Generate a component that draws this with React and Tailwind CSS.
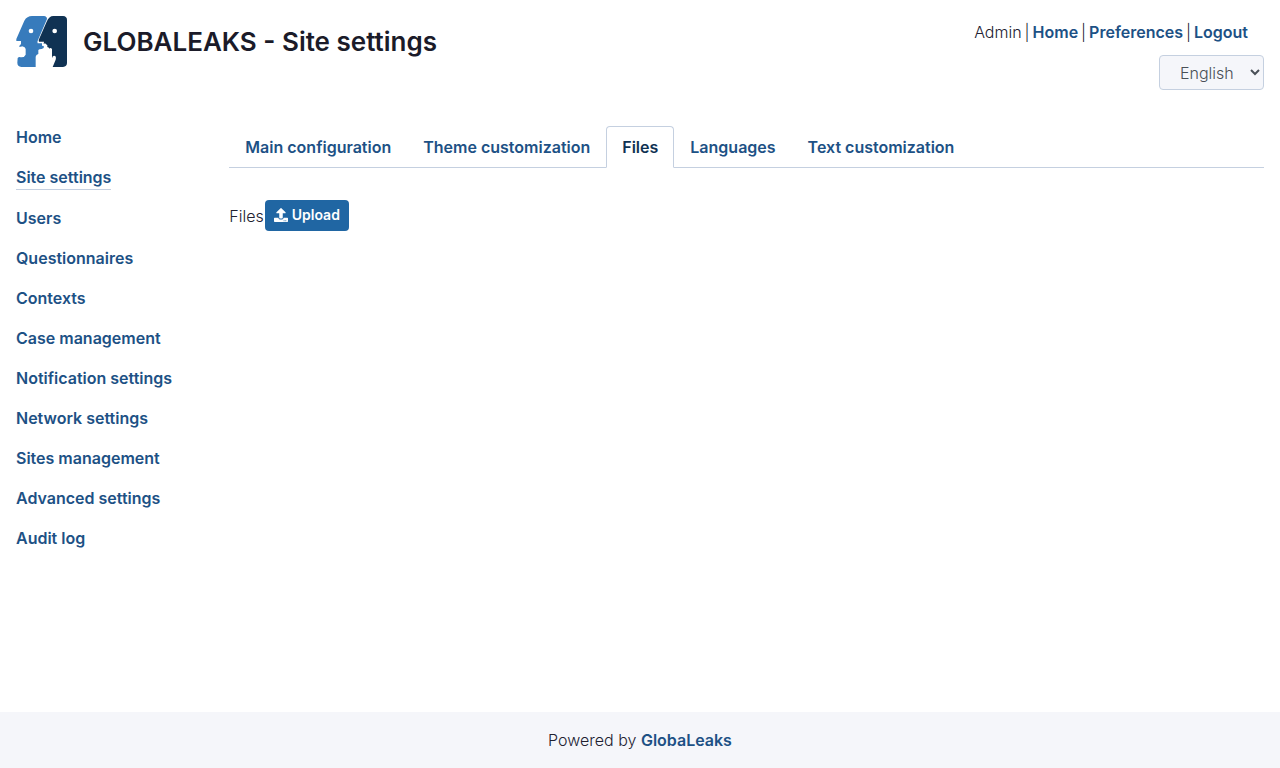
import { FaUpload } from "react-icons/fa";

const menu = [
  "Home",
  "Site settings",
  "Users",
  "Questionnaires",
  "Contexts",
  "Case management",
  "Notification settings",
  "Network settings",
  "Sites management",
  "Advanced settings",
  "Audit log",
];

const tabs = [
  "Main configuration",
  "Theme customization",
  "Files",
  "Languages",
  "Text customization",
];

function Logo() {
  return (
    <svg viewBox="0 0 153 153" className="size-[51px] shrink-0" role="img" aria-label="GlobaLeaks">
      <path
        fill="#377bbc"
        d="M48 0H84Q93 1 93 9L66 72Q63 78 65 82H78V90Q86 88 83 96L77 99Q69 99 67 102V114Q60 116 59 122V153H16Q4 151 4 140L5 126Q9 122 14 124Q25 125 29 116V100Q28 93 18 91Q12 94 9 91L15 84V75H1V69L25 14Q33 0 48 0Z"
      />
      <path
        fill="#103253"
        d="M112 0H141Q153 1 153 12V141Q153 152 141 153H110L119 131Q122 119 114 119Q109 120 108 127V99Q104 94 99 98V95L94 93V88L87 82L83 84L84 77H69L68 72L92 17Q99 0 112 0Z"
      />
      <circle cx="45" cy="45" r="7" fill="#fff" />
      <circle cx="116" cy="45" r="7" fill="#fff" />
    </svg>
  );
}

function Link({ children, className = "" }) {
  return (
    <a href="#" className={`font-semibold text-[#1d5185] ${className}`}>
      {children}
    </a>
  );
}

export default function App() {
  return (
    <div className="flex min-h-screen flex-col bg-white font-['Inter',sans-serif] text-base font-light text-[#212131]">
      <header className="flex items-start justify-between p-4">
        <div className="flex items-center gap-4">
          <Logo />
          <h1 className="text-[26px] leading-8 font-semibold text-[#1b1b29]">
            GLOBALEAKS - Site settings
          </h1>
        </div>
        <div className="flex flex-col items-end gap-[11px] pt-1">
          <div className="flex gap-[3px] pr-4">
            <span>Admin</span>
            <span>|</span>
            <Link>Home</Link>
            <span>|</span>
            <Link>Preferences</Link>
            <span>|</span>
            <Link>Logout</Link>
          </div>
          <select
            aria-label="Language"
            className="h-[35px] w-[105px] rounded border border-[#c5d0e0] bg-[#f5f6fa] pl-4 text-[#495057]"
          >
            <option>English</option>
          </select>
        </div>
      </header>

      <div className="flex grow pt-[19px]">
        <nav className="flex w-1/6 shrink-0 flex-col items-start gap-4 px-4" aria-label="Administration">
          {menu.map((item) => (
            <Link
              key={item}
              className={item === "Site settings" ? "border-b border-[#c5d0e0]" : ""}
            >
              {item}
            </Link>
          ))}
        </nav>
        <main className="min-w-0 grow px-4 pt-px">
          <div role="tablist" className="flex border-b border-[#c5d0e0]">
            {tabs.map((tab) => (
              <button
                key={tab}
                type="button"
                role="tab"
                aria-selected={tab === "Files"}
                className={`-mb-px rounded-t border px-[15px] py-2 font-semibold ${
                  tab === "Files"
                    ? "border-[#c5d0e0] border-b-white bg-white text-[#103253]"
                    : "border-transparent text-[#1d5185]"
                }`}
              >
                {tab}
              </button>
            ))}
          </div>
          <div className="flex items-center gap-px pt-8">
            <span>Files</span>
            <button
              type="button"
              className="flex items-center gap-1 rounded bg-[#2066a3] px-[9px] pt-[5px] pb-1.5 text-sm font-semibold text-white"
            >
              <FaUpload aria-hidden="true" />
              Upload
            </button>
          </div>
        </main>
      </div>

      <footer className="bg-[#f5f6fa] p-4 text-center">
        Powered by <Link>GlobaLeaks</Link>
      </footer>
    </div>
  );
}
